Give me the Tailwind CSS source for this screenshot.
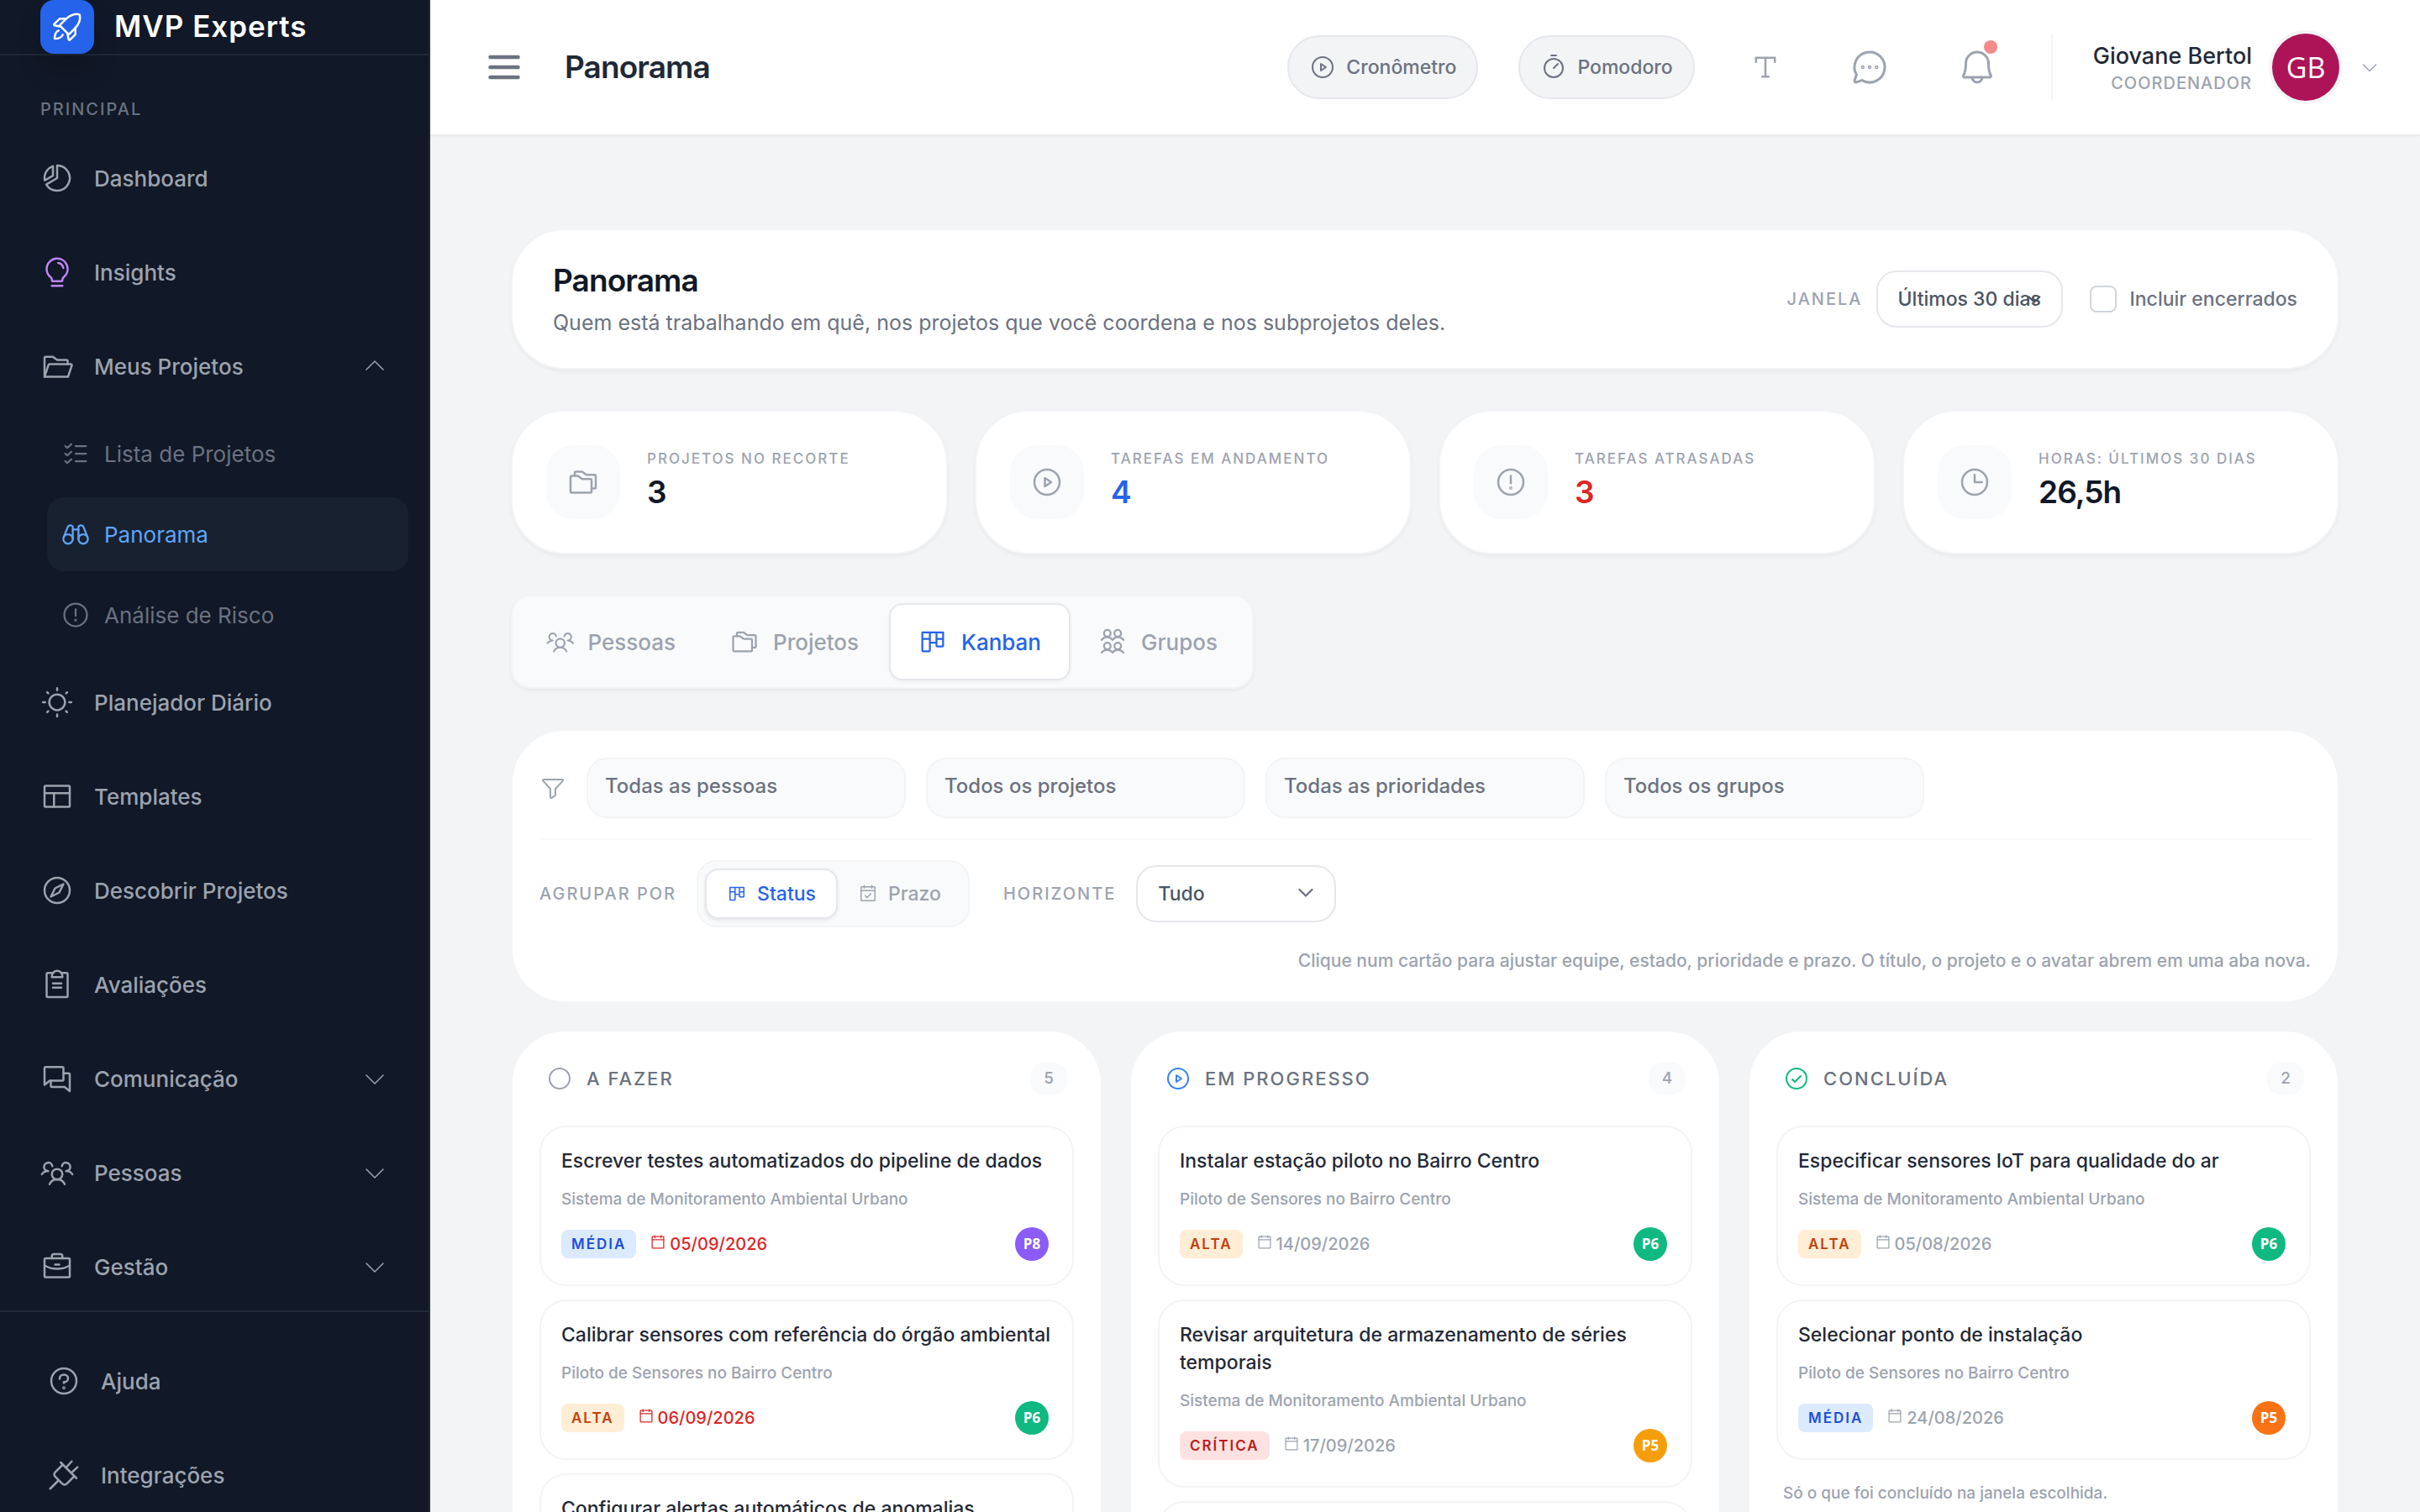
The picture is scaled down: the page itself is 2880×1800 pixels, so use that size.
<!DOCTYPE html>
<html lang="pt-BR">
<head>
  <meta charset="UTF-8" />
  <meta name="viewport" content="width=device-width, initial-scale=1.0"/>
  <title>Panorama - MVP Experts</title>
  <script src="https://cdn.jsdelivr.net/npm/@tailwindcss/browser@4"></script>
</head>
<body class="flex h-screen overflow-hidden bg-[#f3f4f6] font-['Inter','Liberation_Sans',sans-serif] text-[#111827]">

  <!-- icon set -->
  <svg class="hidden" aria-hidden="true">
    <symbol id="i-rocket" viewBox="0 0 256 256"><path d="M70,116l70,70,50-50c34-34,38-74,34-92a12,12,0,0,0-12-12c-18-4-58,0-92,34Z"/><path d="M120,66H74a8,8,0,0,0-6,2L29,107a6,6,0,0,0,3,10l38,8"/><path d="M190,136v46a8,8,0,0,1-2,6l-39,39a6,6,0,0,1-10-3l-8-38"/><path d="M94,188c-8,20-34,30-62,30,0-28,10-54,30-62"/></symbol>
    <symbol id="i-chart" viewBox="0 0 256 256"><path d="M96,37.500v72L33.600,145.500A96,96,0,0,1,96,37.500Z"/><path d="M128,128V32A96,96,0,1,1,45.200,176.600Z"/></symbol>
    <symbol id="i-bulb" viewBox="0 0 256 256"><path d="M88,232h80"/><path d="M78.700,167A79.870,79.870,0,0,1,48,104.450C47.760,61.090,82.720,25,126.070,24a80,80,0,0,1,51.340,142.900A24.300,24.300,0,0,0,168,186v2a8,8,0,0,1-8,8H96a8,8,0,0,1-8-8v-2A24.110,24.110,0,0,0,78.700,167Z"/><path d="M136,57a48,48,0,0,1,39,39"/></symbol>
    <symbol id="i-folder-open" viewBox="0 0 256 256"><path d="M32,208V64a8,8,0,0,1,8-8H93.330a8,8,0,0,1,4.800,1.600l27.740,20.800a8,8,0,0,0,4.800,1.600H200a8,8,0,0,1,8,8v24"/><path d="M32,208l30.180-90.530A8,8,0,0,1,69.770,112H232a8,8,0,0,1,7.590,10.530L211.090,208Z"/></symbol>
    <symbol id="i-list" viewBox="0 0 256 256"><path d="M128,64h88M128,128h88M128,192h88M92,48,57.300,80,40,64M92,112,57.300,144,40,128M92,176,57.300,208,40,192"/></symbol>
    <symbol id="i-binoculars" viewBox="0 0 256 256"><circle cx="64" cy="168" r="40"/><circle cx="192" cy="168" r="40"/><path d="M27.500,151.500,62,64.300A24,24,0,0,1,104,64V168"/><path d="M228.500,151.500,194,64.300A24,24,0,0,0,152,64V168"/><path d="M104,88h48"/></symbol>
    <symbol id="i-warning" viewBox="0 0 256 256"><circle cx="128" cy="128" r="96"/><path d="M128,80v56"/><circle cx="128" cy="172" r="4"/></symbol>
    <symbol id="i-sun" viewBox="0 0 256 256"><circle cx="128" cy="128" r="60"/><path d="M128,36V20M128,236V220M36,128H20M236,128H220M60,60,52,52M204,204l-8-8M60,196l-8,8M204,52l-8,8"/></symbol>
    <symbol id="i-layout" viewBox="0 0 256 256"><rect x="32" y="48" width="192" height="160" rx="8"/><path d="M32,104H224M104,104V208"/></symbol>
    <symbol id="i-compass" viewBox="0 0 256 256"><circle cx="128" cy="128" r="96"/><path d="M144,144,80,176l32-64,64-32Z"/></symbol>
    <symbol id="i-clipboard" viewBox="0 0 256 256"><path d="M96,152h64M96,120h64"/><path d="M160,40h40a8,8,0,0,1,8,8V216a8,8,0,0,1-8,8H56a8,8,0,0,1-8-8V48a8,8,0,0,1,8-8H96"/><path d="M88,72V64a40,40,0,0,1,80,0v8Z"/></symbol>
    <symbol id="i-chats" viewBox="0 0 256 256"><path d="M71.600,144,32,176V48a8,8,0,0,1,8-8H168a8,8,0,0,1,8,8v88a8,8,0,0,1-8,8Z"/><path d="M80,144v40a8,8,0,0,0,8,8h96.400L224,224V96a8,8,0,0,0-8-8H176"/></symbol>
    <symbol id="i-people" viewBox="0 0 256 256"><circle cx="128" cy="140" r="40"/><path d="M196,116a59.800,59.800,0,0,1,48,24M12,140a59.800,59.800,0,0,1,48-24M70.400,216a64,64,0,0,1,115.200,0M60,116A32,32,0,1,1,91.400,78M164.600,78A32,32,0,1,1,196,116"/></symbol>
    <symbol id="i-briefcase" viewBox="0 0 256 256"><rect x="32" y="64" width="192" height="144" rx="8"/><path d="M168,64V48a16,16,0,0,0-16-16H104A16,16,0,0,0,88,48V64M224,118.300A191,191,0,0,1,128,144a191,191,0,0,1-96-25.700M112,112h32"/></symbol>
    <symbol id="i-question" viewBox="0 0 256 256"><circle cx="128" cy="128" r="96"/><path d="M128,144v-8c17.700,0,32-12.500,32-28s-14.300-28-32-28S96,92.500,96,108v4"/><circle cx="128" cy="180" r="4"/></symbol>
    <symbol id="i-plug" viewBox="0 0 256 256"><path d="M104,32,224,152M188,24,144,72M232,68,184,112M120,48,62,106a24,24,0,0,0,0,34l54,54a24,24,0,0,0,34,0l58-58M88,168,24,232"/></symbol>
    <symbol id="i-folders" viewBox="0 0 256 256"><path d="M184,208H40a8,8,0,0,1-8-8V88a8,8,0,0,1,8-8H85.300a8,8,0,0,1,4.800,1.600l27.800,20.800a8,8,0,0,0,4.800,1.600H184a8,8,0,0,1,8,8v88A8,8,0,0,1,184,208Z"/><path d="M64,80V56a8,8,0,0,1,8-8h45.300a8,8,0,0,1,4.800,1.600l27.800,20.800a8,8,0,0,0,4.800,1.600H216a8,8,0,0,1,8,8v88a8,8,0,0,1-8,8H192"/></symbol>
    <symbol id="i-play" viewBox="0 0 256 256"><circle cx="128" cy="128" r="96"/><path d="M160,128,112,96v64Z"/></symbol>
    <symbol id="i-clock" viewBox="0 0 256 256"><circle cx="128" cy="128" r="96"/><path d="M128,72v56h56"/></symbol>
    <symbol id="i-kanban" viewBox="0 0 256 256"><path d="M40,48H216V160a8,8,0,0,1-8,8H168a8,8,0,0,1-8-8V48M104,48V200a8,8,0,0,1-8,8H48a8,8,0,0,1-8-8V48M40,104h64M160,104h56M104,136h56"/></symbol>
    <symbol id="i-group" viewBox="0 0 256 256"><circle cx="84" cy="56" r="28"/><circle cx="172" cy="56" r="28"/><circle cx="84" cy="164" r="28"/><circle cx="172" cy="164" r="28"/><path d="M36,112a56,56,0,0,1,92,0,56,56,0,0,1,92,0M36,220a56,56,0,0,1,92,0,56,56,0,0,1,92,0"/></symbol>
    <symbol id="i-funnel" viewBox="0 0 256 256"><path d="M34.100,61.400A8,8,0,0,1,40,48H216a8,8,0,0,1,5.900,13.400L152,136v58.700a8,8,0,0,1-3.600,6.700l-32,21.300A8,8,0,0,1,104,216V136Z"/></symbol>
    <symbol id="i-calendar" viewBox="0 0 256 256"><rect x="40" y="40" width="176" height="176" rx="8"/><path d="M176,24V56M80,24V56M40,88H216"/></symbol>
    <symbol id="i-calendar-check" viewBox="0 0 256 256"><rect x="40" y="40" width="176" height="176" rx="8"/><path d="M176,24V56M80,24V56M40,88H216M92,152l24,24,48-48"/></symbol>
    <symbol id="i-text" viewBox="0 0 256 256"><path d="M56,88V56H200V88M128,56V200M104,200h48"/></symbol>
    <symbol id="i-chat" viewBox="0 0 256 256"><path d="M79.900,211.100a96,96,0,1,0-35-35L32.400,213.500a8,8,0,0,0,10.100,10.100Z"/><circle cx="84" cy="128" r="4"/><circle cx="128" cy="128" r="4"/><circle cx="172" cy="128" r="4"/></symbol>
    <symbol id="i-bell" viewBox="0 0 256 256"><path d="M96,192a32,32,0,0,0,64,0M56,104a72,72,0,0,1,144,0c0,35.800,8.300,64.600,14.900,76A8,8,0,0,1,208,192H48a8,8,0,0,1-6.900-12C47.700,168.600,56,139.800,56,104Z"/></symbol>
    <symbol id="i-timer" viewBox="0 0 256 256"><circle cx="128" cy="136" r="88"/><path d="M128,136l40-40M104,16h48"/></symbol>
    <symbol id="i-down" viewBox="0 0 256 256"><path d="M208,96l-80,80L48,96"/></symbol>
    <symbol id="i-up" viewBox="0 0 256 256"><path d="M48,160l80-80,80,80"/></symbol>
    <symbol id="i-circle" viewBox="0 0 256 256"><circle cx="128" cy="128" r="96"/></symbol>
    <symbol id="i-check" viewBox="0 0 256 256"><circle cx="128" cy="128" r="96"/><path d="M88,136l24,24,56-56"/></symbol>
    <symbol id="i-menu" viewBox="0 0 256 256"><path d="M40,64H216M40,128H216M40,192H216"/></symbol>
  </svg>

  <!-- sidebar -->
  <aside class="flex w-lg shrink-0 flex-col border-r-2 border-[#1f2937] bg-[#111827]">
    <a href="#" class="flex h-[66px] shrink-0 items-start gap-6 border-b-2 border-[#1f2937] px-12 text-white">
      <span class="flex size-16 items-center justify-center rounded-2xl bg-[#2563eb] shadow-[0_20px_30px_rgba(0,0,0,0.15)]">
        <svg class="size-10 fill-none stroke-current stroke-16" stroke-linecap="round" stroke-linejoin="round"><use href="#i-rocket"/></svg>
      </span>
      <span class="text-[35px] leading-[62px] font-semibold tracking-[1px]">MVP Experts</span>
    </a>
    <nav class="flex-1 overflow-hidden pt-12">
      <h2 class="mb-2.5 px-12 text-[20px] leading-8 font-medium tracking-[2px] text-[#6b7280]">PRINCIPAL</h2>
      <div id="navTop"></div>
      <div id="navSub" class="space-y-2 py-1 pr-6 pl-14"></div>
      <div id="navMain"></div>
    </nav>
    <div id="navFoot" class="h-60 shrink-0 overflow-hidden border-t-2 border-[#1f2937] pt-6.5 pl-2"></div>
  </aside>

  <div class="flex min-w-0 flex-1 flex-col">
    <!-- top bar -->
    <header class="z-10 flex h-40 shrink-0 items-center gap-12 bg-white pr-12 pl-16 shadow-[0_2px_4px_rgba(0,0,0,0.06)]">
      <button type="button" aria-label="Menu" class="text-[#6b7280]">
        <svg class="size-12 fill-none stroke-current stroke-24" stroke-linecap="round"><use href="#i-menu"/></svg>
      </button>
      <h1 class="flex-1 text-[37px] leading-12 font-semibold tracking-tight text-[#1f2937]">Panorama</h1>
      <button type="button" class="flex h-19 items-center gap-3 rounded-full border-2 border-[#e5e7eb] bg-[#f3f4f6] px-6 text-[23px] font-medium text-[#6b7280]">
        <svg class="size-8 fill-none stroke-current stroke-16" stroke-linecap="round" stroke-linejoin="round"><use href="#i-play"/></svg>
        Cronômetro
      </button>
      <button type="button" class="flex h-19 items-center gap-3 rounded-full border-2 border-[#e5e7eb] bg-[#f3f4f6] px-6 text-[23px] font-medium text-[#6b7280]">
        <svg class="size-8 fill-none stroke-current stroke-16" stroke-linecap="round" stroke-linejoin="round"><use href="#i-timer"/></svg>
        Pomodoro
      </button>
      <button type="button" aria-label="Tamanho do texto" class="p-4 text-[#9ca3af]">
        <svg class="size-10 fill-none stroke-current stroke-16" stroke-linecap="round" stroke-linejoin="round"><use href="#i-text"/></svg>
      </button>
      <button type="button" aria-label="Mensagens" class="p-4 text-[#9ca3af]">
        <svg class="size-12 fill-none stroke-current stroke-16" stroke-linecap="round" stroke-linejoin="round"><use href="#i-chat"/></svg>
      </button>
      <button type="button" aria-label="Notificações" class="relative p-4 text-[#9ca3af]">
        <svg class="size-12 fill-none stroke-current stroke-16" stroke-linecap="round" stroke-linejoin="round"><use href="#i-bell"/></svg>
        <span class="absolute top-2 right-4 size-4 rounded-full bg-[#f58a8a]"></span>
      </button>
      <button type="button" class="flex h-20 items-center gap-6 border-l-2 border-[#f3f4f6] pl-12 text-right">
        <span class="pt-1.5">
          <span class="block text-[27px] leading-8 font-medium text-[#1f2937]">Giovane Bertol</span>
          <span class="block text-[20px] leading-8 font-medium tracking-[1px] text-[#9ca3af]">COORDENADOR</span>
        </span>
        <span class="flex size-20 items-center justify-center rounded-full bg-[#ad1457] font-['Open_Sans',sans-serif] text-[34px] text-white ring-4 ring-[#f3f4f6]">GB</span>
        <svg class="size-6 fill-none stroke-[#9ca3af] stroke-16" stroke-linecap="round" stroke-linejoin="round"><use href="#i-down"/></svg>
      </button>
    </header>

    <main class="flex flex-1 flex-col gap-12 overflow-hidden px-24 pt-28">
      <!-- page heading -->
      <section class="flex shrink-0 items-center justify-between rounded-[64px] border-2 border-[#f3f4f6] bg-white px-12 py-9 shadow-[0_2px_4px_rgba(0,0,0,0.05)]">
        <div>
          <h2 class="text-[37px] leading-12 font-semibold tracking-tight">Panorama</h2>
          <p class="mt-2 text-[25px] leading-9 text-[#6b7280]">Quem está trabalhando em quê, nos projetos que você coordena e nos subprojetos deles.</p>
        </div>
        <div class="flex items-center">
          <label for="janela" class="mr-4 text-[20px] font-medium tracking-[2px] text-[#9ca3af]">JANELA</label>
          <div class="relative mr-8">
            <select id="janela" class="h-17 w-[222px] appearance-none rounded-3xl border-2 border-[#e5e7eb] bg-white pl-6 text-[23px] font-medium text-[#4b5563]">
              <option>Últimos 30 dias</option>
            </select>
            <svg class="pointer-events-none absolute top-6 right-6 size-5 fill-none stroke-[#4b5563] stroke-28" stroke-linecap="round" stroke-linejoin="round"><use href="#i-down"/></svg>
          </div>
          <label class="flex items-center gap-4 text-[23px] font-medium text-[#6b7280]">
            <input type="checkbox" class="size-8 appearance-none rounded-lg border-2 border-[#d1d5db] bg-white" />
            Incluir encerrados
          </label>
        </div>
      </section>

      <!-- totals -->
      <section class="grid shrink-0 grid-cols-4 gap-8">
        <div class="flex h-43 items-center gap-8 rounded-[64px] border-2 border-[#f3f4f6] bg-white px-10 shadow-[0_2px_4px_rgba(0,0,0,0.05)]">
          <span class="flex size-22 items-center justify-center rounded-[32px] bg-[#f9fafb] text-[#9ca3af]"><svg class="size-10 fill-none stroke-current stroke-16" stroke-linecap="round" stroke-linejoin="round"><use href="#i-folders"/></svg></span>
          <div>
            <p class="text-[17px] leading-6 font-medium tracking-[2px] text-[#9ca3af]">PROJETOS NO RECORTE</p>
            <p class="text-[37px] leading-14 font-semibold tracking-tight">3</p>
          </div>
        </div>
        <div class="flex h-43 items-center gap-8 rounded-[64px] border-2 border-[#f3f4f6] bg-white px-10 shadow-[0_2px_4px_rgba(0,0,0,0.05)]">
          <span class="flex size-22 items-center justify-center rounded-[32px] bg-[#f9fafb] text-[#9ca3af]"><svg class="size-10 fill-none stroke-current stroke-16" stroke-linecap="round" stroke-linejoin="round"><use href="#i-play"/></svg></span>
          <div>
            <p class="text-[17px] leading-6 font-medium tracking-[2px] text-[#9ca3af]">TAREFAS EM ANDAMENTO</p>
            <p class="text-[37px] leading-14 font-semibold tracking-tight text-[#2563eb]">4</p>
          </div>
        </div>
        <div class="flex h-43 items-center gap-8 rounded-[64px] border-2 border-[#f3f4f6] bg-white px-10 shadow-[0_2px_4px_rgba(0,0,0,0.05)]">
          <span class="flex size-22 items-center justify-center rounded-[32px] bg-[#f9fafb] text-[#9ca3af]"><svg class="size-10 fill-none stroke-current stroke-16" stroke-linecap="round" stroke-linejoin="round"><use href="#i-warning"/></svg></span>
          <div>
            <p class="text-[17px] leading-6 font-medium tracking-[2px] text-[#9ca3af]">TAREFAS ATRASADAS</p>
            <p class="text-[37px] leading-14 font-semibold tracking-tight text-[#dc2626]">3</p>
          </div>
        </div>
        <div class="flex h-43 items-center gap-8 rounded-[64px] border-2 border-[#f3f4f6] bg-white px-10 shadow-[0_2px_4px_rgba(0,0,0,0.05)]">
          <span class="flex size-22 items-center justify-center rounded-[32px] bg-[#f9fafb] text-[#9ca3af]"><svg class="size-10 fill-none stroke-current stroke-16" stroke-linecap="round" stroke-linejoin="round"><use href="#i-clock"/></svg></span>
          <div>
            <p class="text-[17px] leading-6 font-medium tracking-[2px] text-[#9ca3af]">HORAS: ÚLTIMOS 30 DIAS</p>
            <p class="text-[37px] leading-14 font-semibold tracking-tight">26,5h</p>
          </div>
        </div>
      </section>

      <!-- view tabs -->
      <div class="flex h-28 shrink-0 self-start rounded-3xl border-2 border-[#f3f4f6] bg-[#f9fafb] p-2 text-[26px] font-medium text-[#9ca3af] shadow-[0_2px_4px_rgba(0,0,0,0.05)]">
        <button type="button" class="flex w-[218px] items-center gap-4 px-8"><svg class="size-9 fill-none stroke-current stroke-16" stroke-linecap="round" stroke-linejoin="round"><use href="#i-people"/></svg>Pessoas</button>
        <button type="button" class="flex w-[222px] items-center gap-4 px-8"><svg class="size-9 fill-none stroke-current stroke-16" stroke-linecap="round" stroke-linejoin="round"><use href="#i-folders"/></svg>Projetos</button>
        <button type="button" class="flex w-[216px] items-center gap-4 rounded-2xl border-2 border-[#e5e7eb] bg-white px-8 text-[#2563eb] shadow-[0_2px_4px_rgba(0,0,0,0.05)]"><svg class="size-9 fill-none stroke-current stroke-16" stroke-linecap="round" stroke-linejoin="round"><use href="#i-kanban"/></svg>Kanban</button>
        <button type="button" class="flex w-[208px] items-center gap-4 px-8"><svg class="size-9 fill-none stroke-current stroke-16" stroke-linecap="round" stroke-linejoin="round"><use href="#i-group"/></svg>Grupos</button>
      </div>

      <div class="flex flex-col gap-8">
        <!-- filters -->
        <section class="shrink-0 rounded-[64px] border-2 border-[#f3f4f6] bg-white p-8">
          <div class="flex items-center gap-6 border-b-2 border-[#f9fafb] pb-6 text-[24px] font-medium text-[#6b7280]">
            <svg class="size-8 fill-none stroke-[#9ca3af] stroke-16" stroke-linecap="round" stroke-linejoin="round"><use href="#i-funnel"/></svg>
            <select aria-label="Pessoas" class="h-18 w-[380px] appearance-none rounded-3xl border-2 border-[#f3f4f6] bg-[#f9fafb] px-5 pb-1"><option>Todas as pessoas</option></select>
            <select aria-label="Projetos" class="h-18 w-[380px] appearance-none rounded-3xl border-2 border-[#f3f4f6] bg-[#f9fafb] px-5 pb-1"><option>Todos os projetos</option></select>
            <select aria-label="Prioridades" class="h-18 w-[380px] appearance-none rounded-3xl border-2 border-[#f3f4f6] bg-[#f9fafb] px-5 pb-1"><option>Todas as prioridades</option></select>
            <select aria-label="Grupos" class="h-18 w-[380px] appearance-none rounded-3xl border-2 border-[#f3f4f6] bg-[#f9fafb] px-5 pb-1"><option>Todos os grupos</option></select>
          </div>
          <div class="flex items-center pt-6">
            <span class="mr-6 text-[20px] font-medium tracking-[2px] text-[#9ca3af]">AGRUPAR POR</span>
            <div class="mr-10 flex h-20 items-center rounded-3xl border-2 border-[#f3f4f6] bg-[#f9fafb] px-2 text-[23px] font-medium">
              <button type="button" class="flex h-15 items-center gap-3 rounded-2xl border-2 border-[#e5e7eb] bg-white px-6 text-[#2563eb] shadow-[0_2px_4px_rgba(0,0,0,0.08)]"><svg class="size-6 fill-none stroke-current stroke-16" stroke-linecap="round" stroke-linejoin="round"><use href="#i-kanban"/></svg>Status</button>
              <button type="button" class="flex h-15 items-center gap-3 px-6 text-[#9ca3af]"><svg class="size-6 fill-none stroke-current stroke-16" stroke-linecap="round" stroke-linejoin="round"><use href="#i-calendar-check"/></svg>Prazo</button>
            </div>
            <label for="horizonte" class="mr-6 text-[20px] font-medium tracking-[2px] text-[#9ca3af]">HORIZONTE</label>
            <div class="relative">
              <select id="horizonte" class="h-17 w-[238px] appearance-none rounded-3xl border-2 border-[#e5e7eb] bg-white pl-6 text-[23px] font-medium text-[#4b5563]">
                <option>Tudo</option>
              </select>
              <svg class="pointer-events-none absolute top-5 right-6 size-6 fill-none stroke-[#6b7280] stroke-24" stroke-linecap="round" stroke-linejoin="round"><use href="#i-down"/></svg>
            </div>
          </div>
          <p class="mt-6 text-right text-[21px] leading-8 font-medium text-[#9ca3af]">Clique num cartão para ajustar equipe, estado, prioridade e prazo. O título, o projeto e o avatar abrem em uma aba nova.</p>
        </section>

        <!-- board -->
        <section id="board" class="grid grid-cols-3 gap-8"></section>
      </div>
    </main>
  </div>

  <script>
    const navItem = (icon, label, caret = '', color = '') => `
      <a href="#" class="flex h-28 items-center gap-6 px-12 text-[26px] font-medium text-[#9ca3af]">
        <svg class="size-10 fill-none stroke-current stroke-16 ${color}" stroke-linecap="round" stroke-linejoin="round"><use href="#i-${icon}"/></svg>
        <span class="flex-1">${label}</span>
        ${caret && `<svg class="size-8 fill-none stroke-current stroke-12" stroke-linecap="round" stroke-linejoin="round"><use href="#i-${caret}"/></svg>`}
      </a>`;

    const subItem = (icon, label, active) => `
      <a href="#" class="flex h-22 items-center gap-4 rounded-[20px] px-4 text-[26px] ${active ? 'bg-[#18212f] text-[#60a5fa]' : 'text-[#6b7280]'}">
        <svg class="size-9 fill-none stroke-current stroke-16" stroke-linecap="round" stroke-linejoin="round"><use href="#i-${icon}"/></svg>
        ${label}
      </a>`;

    document.getElementById('navTop').innerHTML =
      navItem('chart', 'Dashboard') + navItem('bulb', 'Insights', '', 'text-[#c084fc]') + navItem('folder-open', 'Meus Projetos', 'up');
    document.getElementById('navSub').innerHTML =
      subItem('list', 'Lista de Projetos') + subItem('binoculars', 'Panorama', true) + subItem('warning', 'Análise de Risco');
    document.getElementById('navMain').innerHTML =
      navItem('sun', 'Planejador Diário') + navItem('layout', 'Templates') + navItem('compass', 'Descobrir Projetos') +
      navItem('clipboard', 'Avaliações') + navItem('chats', 'Comunicação', 'down') + navItem('people', 'Pessoas', 'down') +
      navItem('briefcase', 'Gestão', 'down');
    document.getElementById('navFoot').innerHTML = navItem('question', 'Ajuda') + navItem('plug', 'Integrações');

    const badge = {
      'MÉDIA': 'bg-[#dbeafe] text-[#1d4ed8]',
      'ALTA': 'bg-[#ffedd5] text-[#c2410c]',
      'CRÍTICA': 'bg-[#fee2e2] text-[#b91c1c]'
    };
    const urbano = 'Sistema de Monitoramento Ambiental Urbano';
    const piloto = 'Piloto de Sensores no Bairro Centro';

    // title, project, priority, date, late, initials, avatar colour
    const columns = [
      { name: 'A FAZER', icon: 'circle', color: 'text-[#9ca3af]', count: 5, cards: [
        ['Escrever testes automatizados do pipeline de dados', urbano, 'MÉDIA', '05/09/2026', true, 'P8', 'bg-[#8b5cf6]'],
        ['Calibrar sensores com referência do órgão ambiental', piloto, 'ALTA', '06/09/2026', true, 'P6', 'bg-[#10b981]'],
        ['Configurar alertas automáticos de anomalias']
      ] },
      { name: 'EM PROGRESSO', icon: 'play', color: 'text-[#3b82f6]', count: 4, cards: [
        ['Instalar estação piloto no Bairro Centro', piloto, 'ALTA', '14/09/2026', false, 'P6', 'bg-[#10b981]'],
        ['Revisar arquitetura de armazenamento de séries temporais', urbano, 'CRÍTICA', '17/09/2026', false, 'P5', 'bg-[#f59e0b]'],
        ['']
      ] },
      { name: 'CONCLUÍDA', icon: 'check', color: 'text-[#10b981]', count: 2, note: 'Só o que foi concluído na janela escolhida.', cards: [
        ['Especificar sensores IoT para qualidade do ar', urbano, 'ALTA', '05/08/2026', false, 'P6', 'bg-[#10b981]'],
        ['Selecionar ponto de instalação', piloto, 'MÉDIA', '24/08/2026', false, 'P5', 'bg-[#f97316]']
      ] }
    ];

    const card = ([title, project, prio, date, late, who, color]) => `
      <article class="min-h-[191px] rounded-[32px] border-2 border-[#f3f4f6] bg-white p-6">
        <h4 class="text-[23px] leading-[33px] font-medium"><a href="#" class="text-[#1f2937]">${title}</a></h4>
        ${project ? `<p class="mt-3.5 text-[19px] leading-[30px] font-medium text-[#9ca3af]">${project}</p>
        <div class="mt-3.5 flex h-12 items-center gap-4">
          <span class="rounded-lg px-3 text-[17px] leading-[34px] font-semibold tracking-[2px] ${badge[prio]}">${prio}</span>
          <span class="flex flex-1 items-center gap-1 text-[20px] font-medium ${late ? 'text-[#dc2626]' : 'text-[#9ca3af]'}">
            <svg class="mb-1 size-5 fill-none stroke-current stroke-16" stroke-linecap="round" stroke-linejoin="round"><use href="#i-calendar"/></svg>${date}
          </span>
          <a href="#" class="mr-1 flex size-10 items-center justify-center rounded-full font-['Open_Sans',sans-serif] text-[17px] font-bold text-white ${color}">${who}</a>
        </div>` : ''}
      </article>`;

    document.getElementById('board').innerHTML = columns.map(c => `
      <div class="rounded-[64px] border-2 border-[#f3f4f6] bg-white p-8">
        <header class="mb-8 flex h-12 items-center gap-4 px-2">
          <svg class="size-8 fill-none stroke-current stroke-16 ${c.color}" stroke-linecap="round" stroke-linejoin="round"><use href="#i-${c.icon}"/></svg>
          <h3 class="flex-1 text-[22px] font-medium tracking-[2px] text-[#6b7280]">${c.name}</h3>
          <span class="w-11 rounded-2xl bg-[#f9fafb] text-center text-[19px] leading-[38px] font-medium text-[#9ca3af]">${c.count}</span>
        </header>
        <div class="space-y-4">${c.cards.map(card).join('')}</div>
        ${c.note ? `<p class="mt-6 px-2 text-[19px] leading-8 font-medium text-[#9ca3af]">${c.note}</p>` : ''}
      </div>`).join('');
  </script>
</body>
</html>
